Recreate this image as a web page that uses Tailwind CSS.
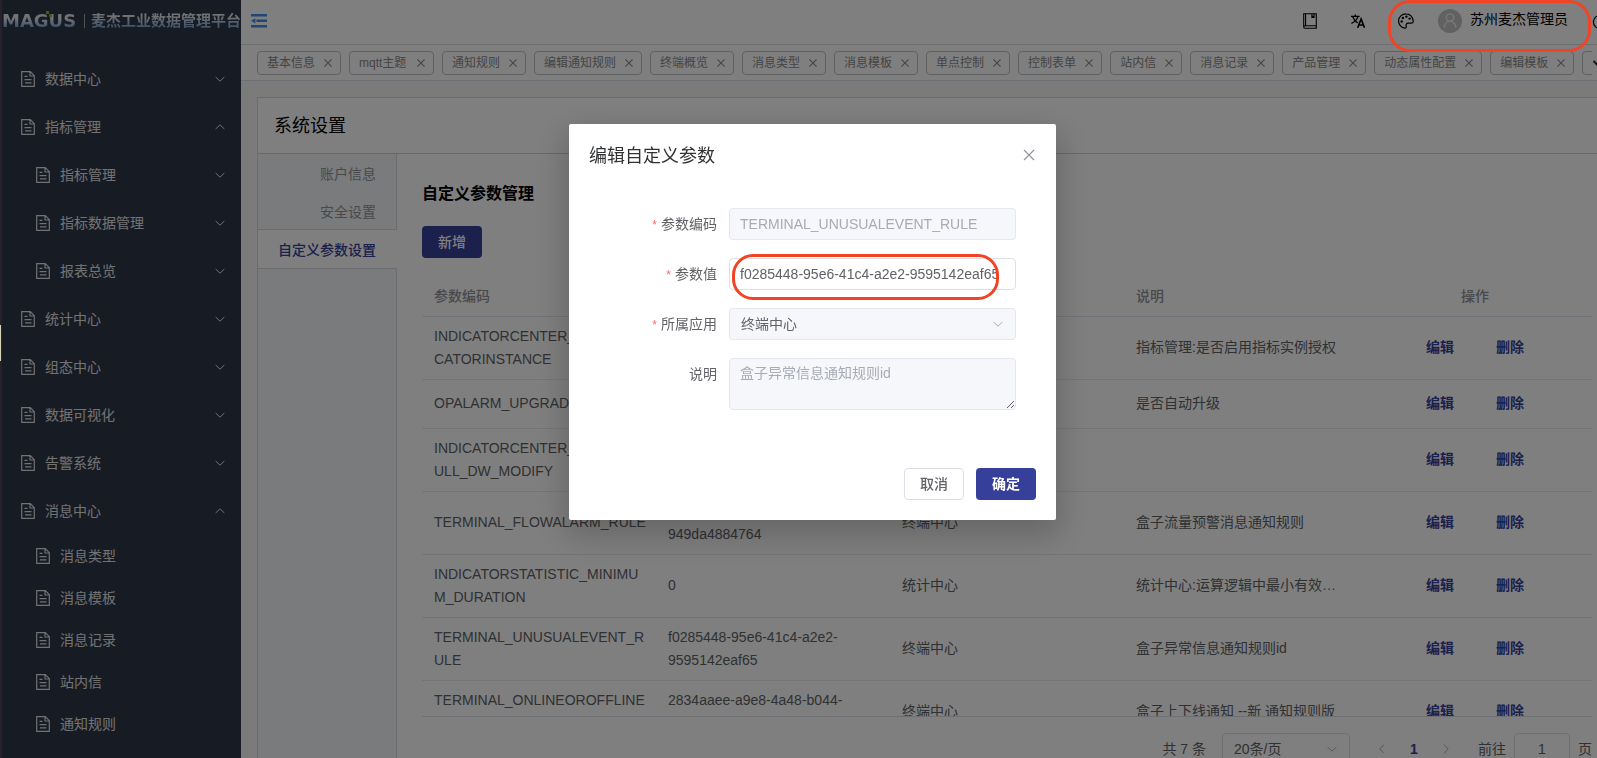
<!DOCTYPE html>
<html lang="zh-CN">
<head>
<meta charset="utf-8">
<meta name="viewport" content="width=device-width, initial-scale=1">
<title>麦杰工业数据管理平台</title>
<script src="https://cdn.jsdelivr.net/npm/@tailwindcss/browser@4"></script>
</head>
<body class="h-screen overflow-hidden bg-white text-sm text-[#606266] font-['Liberation_Sans','Noto_Sans_CJK_SC',sans-serif]">

<svg class="hidden" aria-hidden="true">
  <symbol id="doc" viewBox="0 0 14 16"><path d="M.7.7h8.6l4 4v10.6H.7z M9 .9v4.1h4.2 M3.5 5.4h3 M3.5 8.6h7 M4 11.8h6.5" fill="none" stroke="currentColor" stroke-width="1.2"/></symbol>
  <symbol id="down" viewBox="0 0 12 12"><path d="M1.6 4 6 8.2 10.4 4" fill="none" stroke="currentColor"/></symbol>
  <symbol id="up" viewBox="0 0 12 12"><path d="M1.6 8 6 3.8 10.4 8" fill="none" stroke="currentColor"/></symbol>
  <symbol id="left" viewBox="0 0 12 12"><path d="M8 1.6 3.8 6 8 10.4" fill="none" stroke="currentColor"/></symbol>
  <symbol id="right" viewBox="0 0 12 12"><path d="M4 1.6 8.2 6 4 10.4" fill="none" stroke="currentColor"/></symbol>
  <symbol id="x" viewBox="0 0 14 14"><path d="m3.4 3.4 7.2 7.2M10.6 3.4l-7.2 7.2" fill="none" stroke="currentColor" stroke-width="1.1"/></symbol>
</svg>

<div class="flex h-full">
  <!-- Sidebar -->
  <aside class="flex w-[241px] shrink-0 flex-col overflow-hidden border-l-2 border-[#4a4456] bg-[#2f3747] text-[#e4e4e6]">
    <div class="flex h-[42px] shrink-0 items-center whitespace-nowrap">
      <div class="relative w-[76px] bg-gradient-to-b from-[#e4e6ea] from-40% to-[#6fa0d8] to-80% bg-clip-text font-['DejaVu_Sans'] text-lg font-bold leading-6 text-transparent">MAGUS
        <svg class="absolute left-[44px] top-[2px] h-[7px] w-[7px]" viewBox="0 0 7 7"><path fill="#7ab82e" d="M0 0h3v3H0zM3 3h3v3H3z"/></svg>
      </div>
      <span class="mx-1.5 h-3.5 w-px bg-[#a0a4ac]"></span>
      <h1 class="bg-gradient-to-b from-[#e0e4ea] from-30% to-[#78a0cc] to-80% bg-clip-text text-[15px] font-bold leading-6 text-transparent">麦杰工业数据管理平台</h1>
    </div>
    <nav class="mt-[13px]" aria-label="主菜单">
      <a href="#" class="flex h-12 items-center gap-2.5 pl-[19px] pr-[15px]"><svg class="h-4 w-3.5"><use href="#doc"/></svg>数据中心<svg class="ml-auto h-3 w-3"><use href="#down"/></svg></a>
      <a href="#" class="flex h-12 items-center gap-2.5 pl-[19px] pr-[15px]"><svg class="h-4 w-3.5"><use href="#doc"/></svg>指标管理<svg class="ml-auto h-3 w-3"><use href="#up"/></svg></a>
      <a href="#" class="flex h-12 items-center gap-2.5 pl-[34px] pr-[15px]"><svg class="h-4 w-3.5"><use href="#doc"/></svg>指标管理<svg class="ml-auto h-3 w-3"><use href="#down"/></svg></a>
      <a href="#" class="flex h-12 items-center gap-2.5 pl-[34px] pr-[15px]"><svg class="h-4 w-3.5"><use href="#doc"/></svg>指标数据管理<svg class="ml-auto h-3 w-3"><use href="#down"/></svg></a>
      <a href="#" class="flex h-12 items-center gap-2.5 pl-[34px] pr-[15px]"><svg class="h-4 w-3.5"><use href="#doc"/></svg>报表总览<svg class="ml-auto h-3 w-3"><use href="#down"/></svg></a>
      <a href="#" class="flex h-12 items-center gap-2.5 pl-[19px] pr-[15px]"><svg class="h-4 w-3.5"><use href="#doc"/></svg>统计中心<svg class="ml-auto h-3 w-3"><use href="#down"/></svg></a>
      <a href="#" class="flex h-12 items-center gap-2.5 pl-[19px] pr-[15px]"><svg class="h-4 w-3.5"><use href="#doc"/></svg>组态中心<svg class="ml-auto h-3 w-3"><use href="#down"/></svg></a>
      <a href="#" class="flex h-12 items-center gap-2.5 pl-[19px] pr-[15px]"><svg class="h-4 w-3.5"><use href="#doc"/></svg>数据可视化<svg class="ml-auto h-3 w-3"><use href="#down"/></svg></a>
      <a href="#" class="flex h-12 items-center gap-2.5 pl-[19px] pr-[15px]"><svg class="h-4 w-3.5"><use href="#doc"/></svg>告警系统<svg class="ml-auto h-3 w-3"><use href="#down"/></svg></a>
      <a href="#" class="flex h-12 items-center gap-2.5 pl-[19px] pr-[15px]"><svg class="h-4 w-3.5"><use href="#doc"/></svg>消息中心<svg class="ml-auto h-3 w-3"><use href="#up"/></svg></a>
      <a href="#" class="flex h-[42px] items-center gap-2.5 pl-[34px]"><svg class="h-4 w-3.5"><use href="#doc"/></svg>消息类型</a>
      <a href="#" class="flex h-[42px] items-center gap-2.5 pl-[34px]"><svg class="h-4 w-3.5"><use href="#doc"/></svg>消息模板</a>
      <a href="#" class="flex h-[42px] items-center gap-2.5 pl-[34px]"><svg class="h-4 w-3.5"><use href="#doc"/></svg>消息记录</a>
      <a href="#" class="flex h-[42px] items-center gap-2.5 pl-[34px]"><svg class="h-4 w-3.5"><use href="#doc"/></svg>站内信</a>
      <a href="#" class="flex h-[42px] items-center gap-2.5 pl-[34px]"><svg class="h-4 w-3.5"><use href="#doc"/></svg>通知规则</a>
    </nav>
  </aside>

  <div class="flex min-w-0 flex-1 flex-col bg-[#f6f6f6]">
    <!-- Top bar -->
    <header class="flex h-[45px] shrink-0 items-center overflow-hidden border-b border-[#d8dce5] bg-white pb-0.5 pl-2.5 text-black">
      <button type="button" aria-label="收起菜单" class="text-[#3d8ef0]"><svg class="h-3.5 w-4" viewBox="0 0 16 14"><path fill="currentColor" d="M0 0h16v2.6H0zM5.5 5.5H16v2.6H5.5zM0 11h16v2.6H0zM0 6.8l4.4-2.6v5.2z"/></svg></button>
      <div class="-mr-[11px] ml-auto flex items-center">
        <button type="button" aria-label="文档"><svg class="h-4 w-3.5" viewBox="0 0 14 16" fill="none" stroke="currentColor" stroke-width="1.1"><path d="M.7 13.5V.7h12.6v12.1H2a1.3 1.3 0 0 0-1.3 1.3q0 1.2 1.3 1.2h11.3v-2.5M2.6.7v12"/><path d="M8.9.7v3.4l1.1-.9 1.1.9V.7"/></svg></button>
        <button type="button" aria-label="语言" class="ml-[34px]"><svg class="h-3.5 w-3.5" viewBox="0 0 14 14" fill="none" stroke="currentColor" stroke-width="1.4"><path d="M0 2.4h8.6M4.3.4v2M1.7 2.6q1.4 4.2 5 6.2M6.9 2.6Q5.5 7 .4 9.4"/><path stroke-width="1.6" d="M6.7 13.8 10.1 5l3.4 8.8M7.8 11h4.6"/></svg></button>
        <button type="button" aria-label="主题" class="ml-[33px]"><svg class="h-4 w-4" viewBox="0 0 16 16" fill="none" stroke="currentColor" stroke-width="1.2"><path d="M8 .8a7.2 7.2 0 0 0-1.4 14.3c1.2.2 1.9-.7 1.6-1.8-.5-1.8.2-3.1 2.2-3.1h2.8c1.3 0 2.1-.9 2-2.3C14.9 3.8 11.9.8 8 .8z"/><g fill="currentColor" stroke="none"><circle cx="3.7" cy="8.5" r="1.2"/><circle cx="4.9" cy="4.9" r="1.2"/><circle cx="8.4" cy="3.6" r="1.2"/><circle cx="11.6" cy="5.6" r="1.2"/></g></svg></button>
        <a href="#" class="ml-6 flex items-center gap-2"><svg class="h-6 w-6" viewBox="0 0 24 24"><circle cx="12" cy="12" r="12" fill="#c3c3c3"/><g fill="none" stroke="#f0f0f0" stroke-width="1.4"><circle cx="12" cy="8.6" r="3.7"/><path d="M6.2 18.8c0-8.6 11.6-8.6 11.6 0"/></g></svg><span class="pb-1">苏州麦杰管理员</span></a>
        <button type="button" aria-label="退出" class="ml-6"><svg class="h-4 w-4" viewBox="0 0 16 16"><circle cx="8" cy="9" r="6.6" fill="none" stroke="currentColor" stroke-width="1.2"/></svg></button>
      </div>
    </header>

    <!-- Open pages -->
    <div class="flex h-9 shrink-0 border-b border-[#d8dfe8] bg-white pl-4 text-xs text-[#8a8a8a]">
      <div class="flex h-full min-w-0 flex-1 items-center gap-2 overflow-hidden whitespace-nowrap *:flex *:h-6 *:shrink-0 *:items-center *:justify-between *:rounded *:border *:border-[#bfc0c2] *:pl-[9px] *:pr-[5px] [&_button]:ml-1.5">
        <div><a href="#">基本信息</a><button type="button" aria-label="关闭"><svg class="h-3.5 w-3.5"><use href="#x"/></svg></button></div>
        <div class="w-[85px]"><a href="#">mqtt主题</a><button type="button" aria-label="关闭"><svg class="h-3.5 w-3.5"><use href="#x"/></svg></button></div>
        <div><a href="#">通知规则</a><button type="button" aria-label="关闭"><svg class="h-3.5 w-3.5"><use href="#x"/></svg></button></div>
        <div><a href="#">编辑通知规则</a><button type="button" aria-label="关闭"><svg class="h-3.5 w-3.5"><use href="#x"/></svg></button></div>
        <div><a href="#">终端概览</a><button type="button" aria-label="关闭"><svg class="h-3.5 w-3.5"><use href="#x"/></svg></button></div>
        <div><a href="#">消息类型</a><button type="button" aria-label="关闭"><svg class="h-3.5 w-3.5"><use href="#x"/></svg></button></div>
        <div><a href="#">消息模板</a><button type="button" aria-label="关闭"><svg class="h-3.5 w-3.5"><use href="#x"/></svg></button></div>
        <div><a href="#">单点控制</a><button type="button" aria-label="关闭"><svg class="h-3.5 w-3.5"><use href="#x"/></svg></button></div>
        <div><a href="#">控制表单</a><button type="button" aria-label="关闭"><svg class="h-3.5 w-3.5"><use href="#x"/></svg></button></div>
        <div><a href="#">站内信</a><button type="button" aria-label="关闭"><svg class="h-3.5 w-3.5"><use href="#x"/></svg></button></div>
        <div><a href="#">消息记录</a><button type="button" aria-label="关闭"><svg class="h-3.5 w-3.5"><use href="#x"/></svg></button></div>
        <div><a href="#">产品管理</a><button type="button" aria-label="关闭"><svg class="h-3.5 w-3.5"><use href="#x"/></svg></button></div>
        <div><a href="#">动态属性配置</a><button type="button" aria-label="关闭"><svg class="h-3.5 w-3.5"><use href="#x"/></svg></button></div>
        <div><a href="#">编辑模板</a><button type="button" aria-label="关闭"><svg class="h-3.5 w-3.5"><use href="#x"/></svg></button></div>
        <div class="w-20"></div>
      </div>
      <button type="button" aria-label="更多标签" class="w-[5px] shrink-0 overflow-hidden"><svg class="h-3 w-3 text-[#303133]" viewBox="0 0 12 12"><path d="m1.5 4 4.5 4.5L10.5 4" fill="none" stroke="currentColor" stroke-width="2"/></svg></button>
    </div>

    <!-- Settings page -->
    <main class="ml-4 mt-4 flex min-h-0 flex-1 flex-col overflow-hidden border-l border-t border-[#d6d6d8] bg-white">
      <h2 class="flex h-14 shrink-0 items-center border-b border-[#d0d0d2] px-4 pt-px text-lg text-black">系统设置</h2>
      <div class="flex flex-1">
        <div class="flex w-[139px] shrink-0 flex-col bg-[#f5f7fa] text-right text-[#909399]">
          <a href="#" class="h-[38px] border-r border-[#d6d8de] pr-5 leading-10">账户信息</a>
          <a href="#" class="h-[38px] border-r border-[#d6d8de] pr-5 leading-10">安全设置</a>
          <a href="#" class="-mt-px h-10 border-y border-[#d6d8de] bg-white pr-[21px] font-medium leading-10 text-[#36409a]" aria-current="page">自定义参数设置</a>
          <div class="flex-1 border-r border-[#d6d8de]"></div>
        </div>
        <section class="min-w-0 flex-1 pl-[25px] pr-[5px] pt-7">
          <h3 class="text-base font-bold leading-6 text-black">自定义参数管理</h3>
          <button type="button" class="mt-5 h-8 w-[60px] rounded bg-[#36409a] font-medium text-white">新增</button>
          <div class="mt-5 h-[439px] overflow-hidden border-b border-[#dcdfe6]">
            <table class="w-full table-fixed text-left leading-[23px]">
              <thead class="text-[#909399]">
                <tr class="h-[38px] border-b border-[#e4e7f0] *:px-3 *:font-medium"><th>参数编码</th><th>参数值</th><th>所属应用</th><th>说明</th><th class="text-center">操作</th></tr>
              </thead>
              <tbody class="*:border-b *:border-[#e8e9f0] [&>tr>td]:px-3 [&>tr>td]:py-2 [&_a]:font-bold [&_a]:text-[#36409a]">
                <tr class="h-[63px]"><td>INDICATORCENTER_INDI<br>CATORINSTANCE</td><td>true</td><td>指标中心</td><td class="truncate">指标管理:是否启用指标实例授权</td><td><div class="flex justify-center gap-[42px]"><a href="#">编辑</a><a href="#">删除</a></div></td></tr>
                <tr class="h-[49px]"><td>OPALARM_UPGRADE</td><td>true</td><td>告警系统</td><td class="truncate">是否自动升级</td><td><div class="flex justify-center gap-[42px]"><a href="#">编辑</a><a href="#">删除</a></div></td></tr>
                <tr class="h-[63px]"><td>INDICATORCENTER_N<br>ULL_DW_MODIFY</td><td>true</td><td>指标中心</td><td></td><td><div class="flex justify-center gap-[42px]"><a href="#">编辑</a><a href="#">删除</a></div></td></tr>
                <tr class="h-[63px]"><td class="whitespace-nowrap">TERMINAL_FLOWALARM_RULE</td><td>f0285448-95e6-41c4-<br>949da4884764</td><td>终端中心</td><td class="truncate">盒子流量预警消息通知规则</td><td><div class="flex justify-center gap-[42px]"><a href="#">编辑</a><a href="#">删除</a></div></td></tr>
                <tr class="h-[63px]"><td>INDICATORSTATISTIC_MINIMU<br>M_DURATION</td><td>0</td><td>统计中心</td><td class="truncate">统计中心:运算逻辑中最小有效时长配置</td><td><div class="flex justify-center gap-[42px]"><a href="#">编辑</a><a href="#">删除</a></div></td></tr>
                <tr class="h-[63px]"><td>TERMINAL_UNUSUALEVENT_R<br>ULE</td><td>f0285448-95e6-41c4-a2e2-<br>9595142eaf65</td><td>终端中心</td><td class="truncate">盒子异常信息通知规则id</td><td><div class="flex justify-center gap-[42px]"><a href="#">编辑</a><a href="#">删除</a></div></td></tr>
                <tr class="h-[63px]"><td>TERMINAL_ONLINEOROFFLINE<br>_RULE</td><td>2834aaee-a9e8-4a48-b044-<br>949da4884764</td><td>终端中心</td><td class="truncate">盒子上下线通知 --新 通知规则版</td><td><div class="flex justify-center gap-[42px]"><a href="#">编辑</a><a href="#">删除</a></div></td></tr>
              </tbody>
            </table>
          </div>
          <div class="mt-4 flex items-center justify-end whitespace-nowrap">
            <span>共 7 条</span>
            <div class="relative ml-4 w-32">
              <select aria-label="每页条数" class="h-8 w-full appearance-none rounded border border-[#dcdfe6] bg-white px-[11px]"><option>20条/页</option></select>
              <svg class="pointer-events-none absolute right-3 top-2.5 h-3 w-3 text-[#a8abb2]"><use href="#down"/></svg>
            </div>
            <button type="button" aria-label="上一页" class="ml-4 flex h-8 w-8 items-center justify-center text-[#a8abb2]"><svg class="h-3 w-3"><use href="#left"/></svg></button>
            <button type="button" class="h-8 w-8 font-bold text-[#36409a]">1</button>
            <button type="button" aria-label="下一页" class="flex h-8 w-8 items-center justify-center text-[#a8abb2]"><svg class="h-3 w-3"><use href="#right"/></svg></button>
            <label for="page" class="ml-4">前往</label>
            <input id="page" value="1" class="mx-2 h-8 w-14 rounded border border-[#dcdfe6] text-center">
            <span>页</span>
          </div>
        </section>
      </div>
    </main>
  </div>
</div>

<!-- Dialog over a dimmed page -->
<div class="fixed inset-0 flex items-start justify-center bg-black/50 pl-7 pt-[124px]">
  <div role="dialog" aria-modal="true" aria-labelledby="dlg" class="w-[487px] rounded-xs bg-white p-5 shadow-[0_12px_32px_4px_rgba(0,0,0,0.2)]">
    <div class="flex h-[22px] items-center justify-between">
      <h2 id="dlg" class="pt-0.5 text-lg text-[#303133]">编辑自定义参数</h2>
      <button type="button" aria-label="关闭" class="text-[#909399]"><svg class="h-3.5 w-3.5" viewBox="0 0 14 14"><path d="m2 2 10 10M12 2 2 12" fill="none" stroke="currentColor" stroke-width="1.1"/></svg></button>
    </div>
    <form class="mt-[42px] flex flex-col gap-[18px] pr-5">
      <div class="flex gap-3"><label for="code" class="w-32 text-right leading-8"><span class="mr-1 text-xs text-[#f56c6c]">*</span>参数编码</label><input id="code" disabled value="TERMINAL_UNUSUALEVENT_RULE" class="h-8 min-w-0 flex-1 rounded border border-[#e4e7ed] bg-[#f5f7fa] px-2.5 text-[#a8abb2]"></div>
      <div class="flex gap-3"><label for="val" class="w-32 text-right leading-8"><span class="mr-1 text-xs text-[#f56c6c]">*</span>参数值</label><input id="val" value="f0285448-95e6-41c4-a2e2-9595142eaf65" class="h-8 min-w-0 flex-1 rounded border border-[#dcdfe6] px-2.5"></div>
      <div class="flex gap-3"><label for="app" class="w-32 text-right leading-8"><span class="mr-1 text-xs text-[#f56c6c]">*</span>所属应用</label>
        <div class="relative flex-1"><select id="app" disabled class="h-8 w-full appearance-none rounded border border-[#e4e7ed] bg-[#f5f7fa] px-[11px] text-[#606266] opacity-100"><option>终端中心</option></select><svg class="pointer-events-none absolute right-3 top-2.5 h-3 w-3 text-[#a8abb2]"><use href="#down"/></svg></div></div>
      <div class="flex gap-3"><label for="memo" class="w-32 text-right leading-8">说明</label><textarea id="memo" disabled class="h-[52px] min-w-0 flex-1 resize-y rounded border border-[#e4e7ed] bg-[#f5f7fa] px-2.5 py-1 leading-[21px] text-[#a8abb2]">盒子异常信息通知规则id</textarea></div>
      <div class="-mr-5 mt-10 flex justify-end gap-3"><button type="button" class="h-8 w-[60px] rounded border border-[#dcdfe6] font-medium">取消</button><button type="button" class="h-8 w-[60px] rounded bg-[#36409a] font-bold text-white">确定</button></div>
    </form>
  </div>
</div>

<!-- Hand-drawn highlight marks on top of everything -->
<div class="pointer-events-none absolute left-[1388px] top-0 h-[52px] w-[203px] rounded-[22px] border-3 border-[#f04425]"></div>
<div class="pointer-events-none absolute left-[732px] top-[254px] h-[46px] w-[267px] rounded-[21px] border-3 border-[#f04425]"></div>
<div class="pointer-events-none absolute left-0 top-[325px] h-9 w-px bg-[#d8d4b8]"></div>
</body>
</html>
